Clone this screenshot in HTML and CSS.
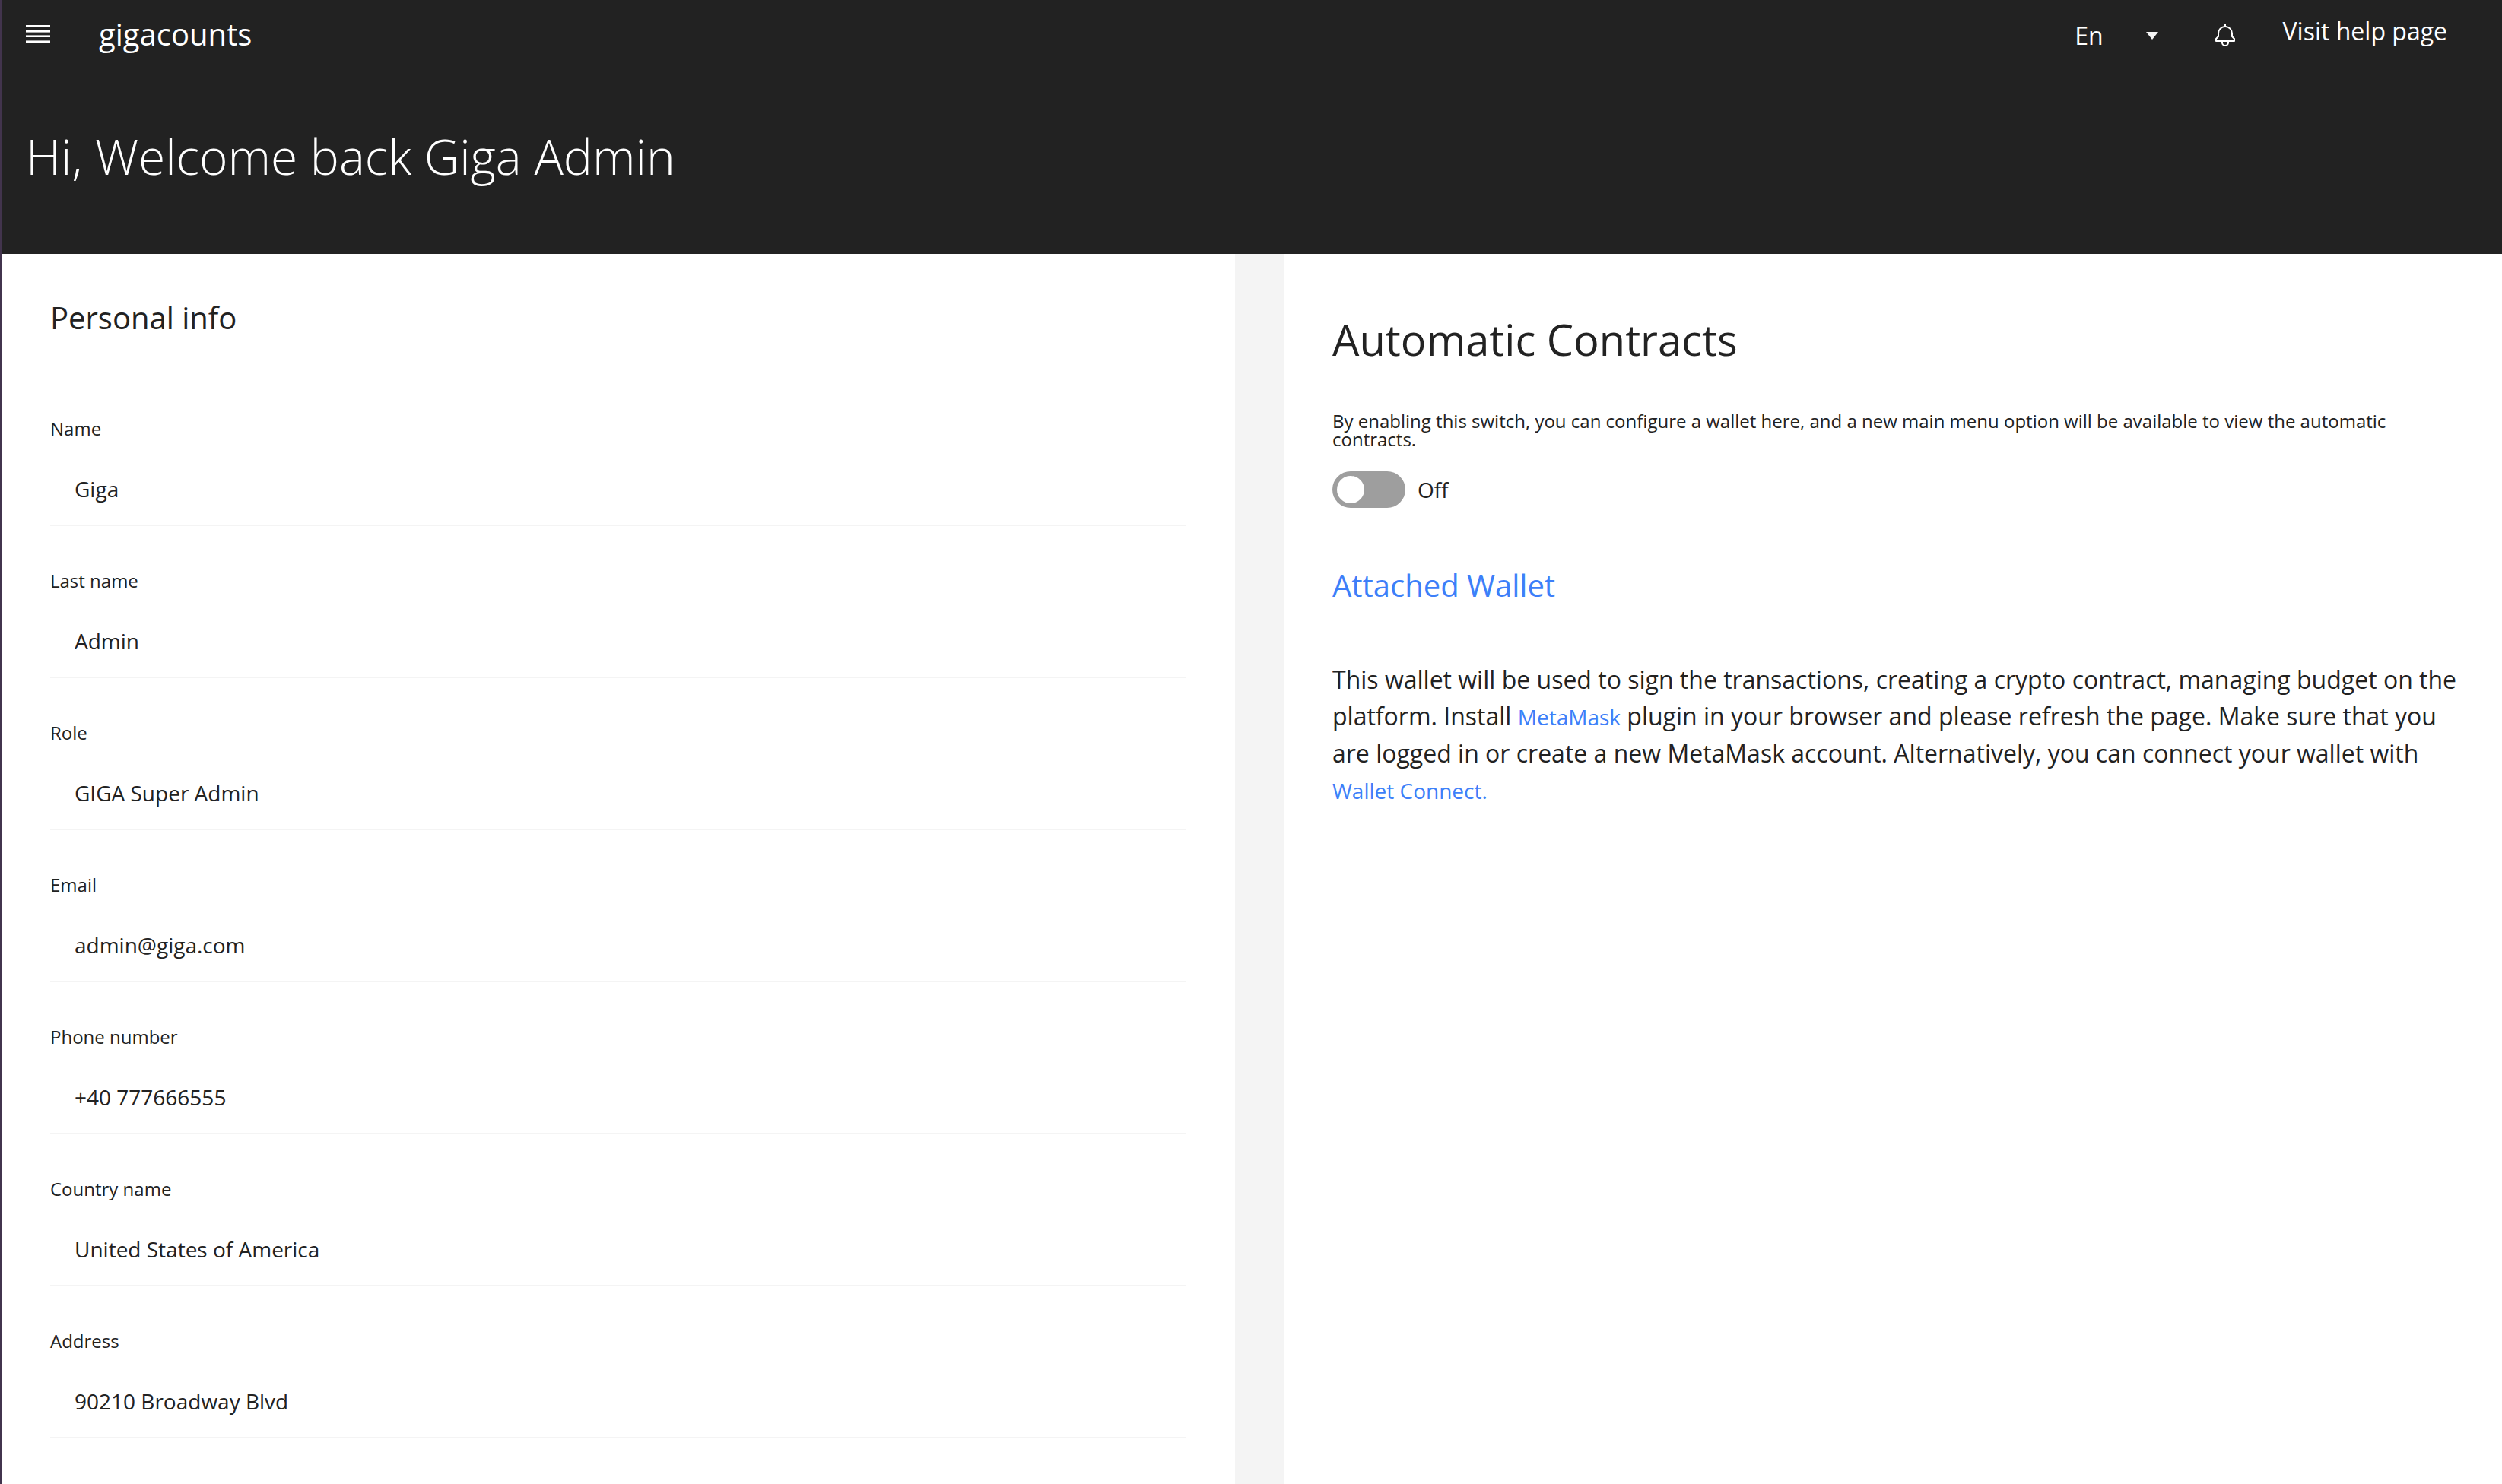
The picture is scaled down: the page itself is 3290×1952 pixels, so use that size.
FILE: index.html
```html
<!DOCTYPE html>
<html lang="en">
<head>
<meta charset="utf-8">
<title>gigacounts</title>
<link rel="stylesheet" href="styles.css">
</head>
<body>
<header class="header">
  <div class="topbar">
    <button class="icon-button menu-button" type="button" aria-label="Open menu">
      <svg width="32" height="32" viewBox="0 0 32 32" fill="#fff" aria-hidden="true"><path d="M0 4h32v2H0zM0 11h32v2H0zM0 18h32v2H0zM0 25h32v2H0z"/><path fill-opacity=".6" d="M0 6h32v1H0zM0 13h32v1H0zM0 17h32v1H0zM0 24h32v1H0z"/></svg>
    </button>
    <a class="brand" href="#">gigacounts</a>
    <nav class="actions" aria-label="Tools">
      <button class="language" type="button" aria-haspopup="listbox">
        <span>En</span>
        <svg width="16" height="10" viewBox="0 0 16 10" fill="#f4f4f4" aria-hidden="true"><path d="M0 0h16L8 10z"/></svg>
      </button>
      <button class="icon-button bell-button" type="button" aria-label="Notifications">
        <svg width="32" height="32" viewBox="0 0 32 32" fill="#fff" aria-hidden="true"><path d="M28.7 19.3L26 16.6V13a10 10 0 0 0-9-9.9V1h-2v2.1A10 10 0 0 0 6 13v3.6l-2.7 2.7A1 1 0 0 0 3 20v3a1 1 0 0 0 1 1h7v1a5 5 0 0 0 10 0v-1h7a1 1 0 0 0 1-1v-3a1 1 0 0 0-.3-.7zM19 25a3 3 0 0 1-6 0v-1h6zm8-3H5v-1.6l2.7-2.7A1 1 0 0 0 8 17v-4a8 8 0 0 1 16 0v4a1 1 0 0 0 .3.7l2.7 2.7z"/></svg>
      </button>
      <a class="help" href="#">Visit help page</a>
    </nav>
  </div>
  <h1 class="welcome">Hi, Welcome back Giga Admin</h1>
</header>
<main class="columns">
  <section class="panel">
    <h2 class="heading">Personal info</h2>
    <form class="fields">
      <div class="field"><label for="name">Name</label><input id="name" value="Giga" readonly></div>
      <div class="field"><label for="last">Last name</label><input id="last" value="Admin" readonly></div>
      <div class="field"><label for="role">Role</label><input id="role" value="GIGA Super Admin" readonly></div>
      <div class="field"><label for="email">Email</label><input id="email" type="email" value="admin@giga.com" readonly></div>
      <div class="field"><label for="phone">Phone number</label><input id="phone" type="tel" value="+40 777666555" readonly></div>
      <div class="field"><label for="country">Country name</label><input id="country" value="United States of America" readonly></div>
      <div class="field"><label for="address">Address</label><input id="address" value="90210 Broadway Blvd" readonly></div>
    </form>
  </section>
  <section class="panel contracts">
    <h2 class="title">Automatic Contracts</h2>
    <label class="hint" for="auto">By enabling this switch, you can configure a wallet here, and a new main menu option will be available to view the automatic contracts.</label>
    <div class="switch-row">
      <input class="switch" id="auto" type="checkbox" role="switch">
      <span>Off</span>
    </div>
    <h3 class="heading wallet">Attached Wallet</h3>
    <p class="copy">This wallet will be used to sign the transactions, creating a crypto contract, managing budget on the platform. Install <a href="#">MetaMask</a> plugin in your browser and please refresh the page. Make sure that you are logged in or create a new MetaMask account. Alternatively, you can connect your wallet with <a href="#">Wallet Connect.</a></p>
  </section>
</main>
</body>
</html>
```
FILE: styles.css
```css
* { box-sizing: border-box; }

body {
  margin: 0;
  min-height: 100vh;
  display: flex;
  flex-direction: column;
  border-left: 2px solid #42344d;
  background: #f4f4f4;
  color: #222;
  font-family: "Open Sans", "Noto Sans", sans-serif;
  font-size: 28px;
  line-height: 36px;
}

h1, h2, h3, p { margin: 0; font-weight: 400; }
a { color: #3d7ff9; text-decoration: none; }
button, input { font: inherit; color: inherit; }
svg { display: block; }

button {
  padding: 0;
  border: 0;
  background: none;
}

.header {
  background: #222;
  color: #fff;
}

.topbar {
  display: flex;
  align-items: center;
  height: 90px;
  padding: 0 72px 0 32px;
}

.brand {
  margin-left: 64px;
  color: #fff;
  font-size: 40px;
  line-height: 56px;
}

.actions {
  display: flex;
  align-items: center;
  margin-left: auto;
  padding-top: 4px;
  font-size: 32px;
  line-height: 48px;
}

.language {
  display: flex;
  align-items: center;
  gap: 56px;
}

.bell-button { margin: 0 60px 0 72px; }

.help {
  padding-bottom: 12px;
  color: #fff;
}

.welcome {
  padding: 74px 32px 86px;
  font-size: 64px;
  font-weight: 300;
  line-height: 84px;
}

.columns {
  flex: 1;
  display: grid;
  grid-template-columns: calc(50% - 22px) minmax(0, 1fr);
  column-gap: 64px;
}

.panel {
  padding: 56px 64px 0;
  background: #fff;
}

.contracts { padding-right: 48px; }

.heading {
  font-size: 40px;
  line-height: 56px;
}

.fields {
  display: grid;
  gap: 60px;
  padding: 106px 0 60px;
}

.field label, .hint {
  display: block;
  font-size: 24px;
  line-height: 24px;
}

.field input {
  display: block;
  width: 100%;
  height: 80px;
  margin-top: 36px;
  padding: 0 32px 16px;
  border: 0;
  border-bottom: 2px solid #f4f4f4;
  outline: 0;
  background: #fff;
}

.title {
  padding: 20px 0 60px;
  font-size: 56px;
  line-height: 72px;
}

.switch-row {
  display: flex;
  align-items: center;
  gap: 16px;
  margin-top: 30px;
}

.switch {
  appearance: none;
  width: 96px;
  height: 48px;
  margin: 0;
  padding: 6px;
  border-radius: 24px;
  background: #9e9e9e;
}

.switch::before {
  content: "";
  display: block;
  width: 36px;
  height: 36px;
  border-radius: 50%;
  background: #fff;
}

.wallet {
  padding: 74px 0 72px;
  color: #3d7ff9;
}

.copy {
  font-size: 32px;
  line-height: 48px;
}

.copy a { font-size: 28px; }
```
